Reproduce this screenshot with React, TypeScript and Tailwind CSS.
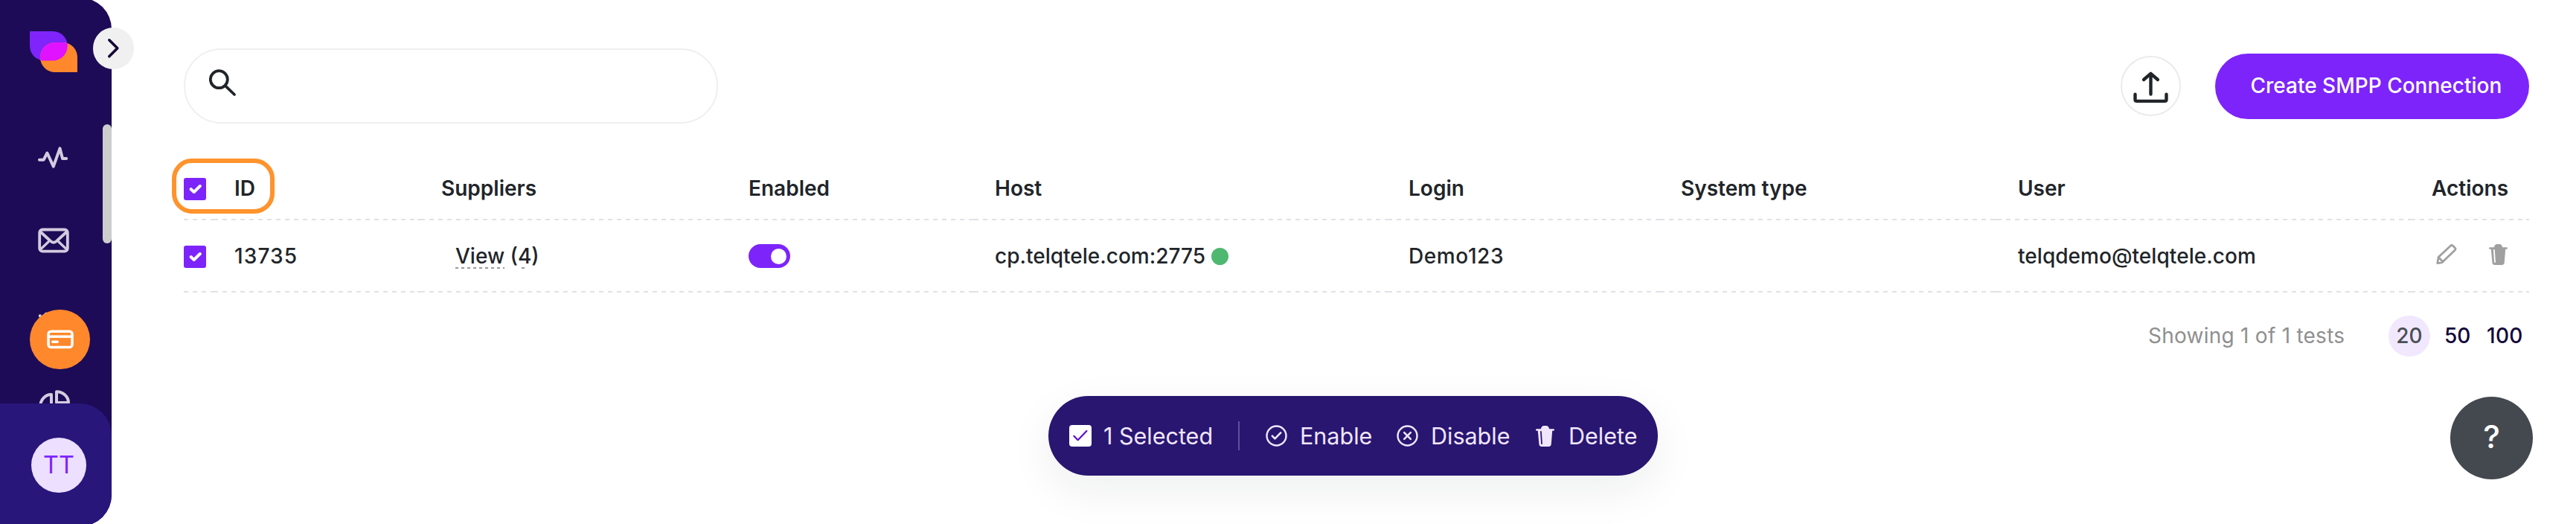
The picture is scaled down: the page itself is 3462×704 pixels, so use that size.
import type { ReactNode } from "react";

function Logo() {
  const purple = "M40 42 H71 A19.75 19.75 0 0 1 71 81.5 H59.75 A19.75 19.75 0 0 1 40 61.75 Z";
  const orange = "M74 57 H84 A20 20 0 0 1 104 77 V97 H74 A20 20 0 0 1 74 57 Z";
  return (
    <svg className="mt-[45px] ml-10 h-[55px] w-16 shrink-0" viewBox="40 42 64 55">
      <defs>
        <clipPath id="logo-overlap">
          <path d={orange} />
        </clipPath>
      </defs>
      <path d={purple} fill="#7f24fb" />
      <path d={orange} fill="#ff882c" />
      <path d={purple} fill="#e012ff" clipPath="url(#logo-overlap)" />
    </svg>
  );
}

function PulseIcon() {
  return (
    <svg
      className="h-[30px] w-[42px] shrink-0"
      viewBox="50 197 42 30"
      fill="none"
      stroke="#d3cce0"
      strokeWidth="4"
      strokeLinecap="round"
      strokeLinejoin="round"
    >
      <path d="M53 214.7 H58.7 L63.4 205.5 L71.8 223.7 L80.5 199.3 L84 212.9 H89.2" />
    </svg>
  );
}

function MailIcon() {
  return (
    <svg
      className="mt-[78.5px] ml-px h-[34px] w-[42px] shrink-0"
      viewBox="51 305.5 42 34"
      fill="none"
      stroke="#d3cce0"
      strokeWidth="3.8"
      strokeLinecap="round"
      strokeLinejoin="round"
    >
      <rect x="53.2" y="308" width="37.6" height="29.2" rx="4" />
      <path d="M55.5 312 L67.5 323 Q72 327.5 76.5 323 L88.5 312" />
      <path d="M55.5 333.5 L65.5 324 M88.5 333.5 L78.5 324" strokeWidth="3.2" />
    </svg>
  );
}

function TrendIcon() {
  return (
    <svg
      className="mt-[76px] h-[12px] w-[20px] shrink-0"
      viewBox="50 415.5 20 12"
      fill="none"
      stroke="#d3cce0"
      strokeWidth="4"
      strokeLinecap="round"
    >
      <path d="M53.8 423.8 V423.9 M58.6 424.5 L62.4 421" />
    </svg>
  );
}

function PieIcon() {
  return (
    <svg
      className="mt-[95.5px] ml-px h-[44px] w-[44px] shrink-0"
      viewBox="51 523 44 44"
      fill="none"
      stroke="#d3cce0"
      strokeWidth="4"
      strokeLinejoin="round"
    >
      <path d="M76 526.2 C85 526.2 92 533 92 541 H76 Z" />
      <path d="M69 530 C61 530 54.2 537 54.2 546 C54.2 556 61 563 71 563 C78 563 84 559 86 553 L69 546 Z" />
    </svg>
  );
}

function TrashIcon({ className, slit }: { className: string; slit: string }) {
  return (
    <svg className={className} viewBox="0 0 25 28" fill="currentColor">
      <path d="M1.2 4.2 H6.8 C7.4 1.6 9 0 11 0 H14 C16 0 17.6 1.6 18.2 4.2 H23.8 Q25 4.3 25 5.4 Q25 6.6 23.8 6.7 H22.2 L20.8 24.6 Q20.5 28 17.4 28 H7.8 Q4.7 28 4.4 24.6 L2.8 6.7 H1.2 Q0 6.6 0 5.4 Q0 4.3 1.2 4.2 Z" />
      <path d="M6.9 7.8 L8 24" stroke={slit} strokeWidth="1.8" strokeLinecap="round" />
    </svg>
  );
}

function PencilIcon() {
  return (
    <svg
      className="h-7 w-7"
      viewBox="0 0 28 28"
      fill="none"
      stroke="currentColor"
      strokeWidth="2.8"
      strokeLinejoin="round"
      strokeLinecap="round"
    >
      <path d="M1.8 25.6 L3.1 17.6 L19.4 2.2 Q21 0.9 22.5 2.2 L25.3 5 Q26.7 6.5 25.3 8 L9.2 23.6 Q8.4 24.4 7.2 24.8 Z" />
      <path d="M3.4 17.8 L9 23.4" />
    </svg>
  );
}

function Checkbox() {
  return (
    <span className="flex size-[30px] rounded-[3px] bg-[#7d24fb]">
      <svg
        viewBox="0 0 30 30"
        fill="none"
        stroke="#fff"
        strokeWidth="4"
        strokeLinecap="round"
        strokeLinejoin="round"
      >
        <path d="M9.7 15.2 L13.7 19 L21.8 11" />
      </svg>
    </span>
  );
}

function Sidebar() {
  return (
    <aside className="-mt-[3px] flex h-[710px] w-[150px] shrink-0 flex-col overflow-hidden rounded-r-[42px] bg-[#1d0b57]">
      <Logo />
      <nav className="mt-[70px] flex h-[375px] shrink-0 justify-between">
        <div className="flex h-[420px] flex-col pt-[30px] pl-[50px]">
          <PulseIcon />
          <MailIcon />
          <TrendIcon />
          <PieIcon />
        </div>
        <div className="h-[160px] w-3 rounded-full bg-[#cdcdcd]" />
      </nav>
      <div className="z-10 flex flex-1 rounded-tr-[43px] bg-[#28167a] pt-[46px] pl-[42px]">
        <div className="flex size-[74px] items-center justify-center rounded-full bg-[#ecdfff] text-[32.4px] text-[#7f24ff]">
          TT
        </div>
      </div>
    </aside>
  );
}

const GRID = "grid grid-cols-[40px_278px_413px_331px_556px_366px_453px_556px_159px]";
const CELL =
  "flex items-center bg-[linear-gradient(#dee2e6,#dee2e6),repeating-linear-gradient(90deg,#dee2e6_0_6px,transparent_6px_12px)] bg-[length:4px_2px,100%_2px] bg-[position:100%_100%,0_100%] bg-no-repeat";

function Cell({ children, first }: { children?: ReactNode; first?: boolean }) {
  return <div className={first ? CELL : `${CELL} pl-7`}>{children}</div>;
}

const HEADERS = ["ID", "Suppliers", "Enabled", "Host", "Login", "System type", "User", "Actions"];

function Table() {
  return (
    <div className="mt-[46px] w-[3152px] whitespace-nowrap text-[28px] text-[#212529]">
      <div className={`${GRID} h-[84px] font-semibold`}>
        <Cell first>
          <Checkbox />
        </Cell>
        {HEADERS.map((h) => (
          <Cell key={h}>
            <span className="pb-[3px]">{h}</span>
          </Cell>
        ))}
      </div>
      <div className={`${GRID} h-[97px] font-medium`}>
        <Cell first>
          <Checkbox />
        </Cell>
        <Cell>
          <span className="pb-[2px] tracking-[1.1px]">13735</span>
        </Cell>
        <Cell>
          <span className="ml-[19px] pb-[2px]">
            <span className="bg-[repeating-linear-gradient(90deg,#999_0_4px,transparent_4px_8px)] bg-[length:100%_2px] bg-[position:0_100%] bg-no-repeat">
              View
            </span>{" "}
            (
            <span className="bg-[linear-gradient(#999,#999)] bg-[length:4px_2px] bg-[position:5px_100%] bg-no-repeat">
              4
            </span>
            )
          </span>
        </Cell>
        <Cell>
          <span className="mb-px flex h-8 w-14 items-center justify-end rounded-full bg-[#7d24fb] pr-[5.5px]">
            <span className="size-[21px] rounded-full bg-white" />
          </span>
        </Cell>
        <Cell>
          <span className="pb-[2px]">cp.telqtele.com:2775</span>
          <span className="ml-2 size-[23.5px] rounded-full bg-[#4fb870]" />
        </Cell>
        <Cell>
          <span className="pb-[2px] tracking-[0.6px]">Demo123</span>
        </Cell>
        <Cell />
        <Cell>
          <span className="pb-[2px] tracking-[0.05px]">telqdemo@telqtele.com</span>
        </Cell>
        <Cell>
          <span className="mb-[5px] ml-1.5 flex items-center gap-[43px] text-[#a0a0a0]">
            <PencilIcon />
            <TrashIcon className="h-7 w-[25px]" slit="#fff" />
          </span>
        </Cell>
      </div>
    </div>
  );
}

function Toolbar() {
  return (
    <div className="mt-[65px] flex w-[3152px] items-start">
      <div className="flex h-[101px] w-[718px] rounded-[50px] border-2 border-[#efefef] pt-6 pl-8">
        <svg className="h-10 w-10" viewBox="281 91 40 40" fill="none" stroke="#212529" strokeWidth="3.8" strokeLinecap="round">
          <circle cx="294.3" cy="106.7" r="11.5" />
          <path d="M303.2 115.6 L315 127" />
        </svg>
      </div>
      <div className="mt-[10px] ml-auto flex size-[81px] items-center justify-center rounded-full border-2 border-[#ebebeb]">
        <svg
          className="h-12 w-12"
          viewBox="2866.5 91.5 48 48"
          fill="none"
          stroke="#212529"
          strokeWidth="4.4"
          strokeLinecap="round"
          strokeLinejoin="round"
        >
          <path d="M2890 98.5 V126 M2880.6 106.5 L2890 98.3 L2899.4 106.5" />
          <path d="M2869 126.3 V133 Q2869 135.4 2871.4 135.4 H2908.6 Q2911 135.4 2911 133 V126.3" />
        </svg>
      </div>
      <button className="mt-[7px] ml-[46px] h-[88px] w-[422px] rounded-full bg-[#7d24fb] pb-[3px] pl-[47.5px] text-left text-[28px] font-medium whitespace-nowrap text-white">
        Create SMPP Connection
      </button>
    </div>
  );
}

function Pagination() {
  return (
    <div className="mt-[31px] flex h-[55px] w-[3152px] items-center justify-end text-[28px] font-medium whitespace-nowrap text-[#120638]">
      <span className="w-[323px] pb-[2px] font-normal tracking-[0.25px] text-[#8f8f8f]">Showing 1 of 1 tests</span>
      <span className="flex h-[55px] w-14 items-center justify-center rounded-full bg-[#f1e8fe] pb-[2px] text-[#4a4f55]">
        20
      </span>
      <span className="ml-[19px] w-[57px] pb-[2px]">50</span>
      <span className="w-[57px] pb-[2px] tracking-[0.3px]">100</span>
    </div>
  );
}

function CircleIcon({ d }: { d: string }) {
  return (
    <svg
      className="h-[29px] w-[29px]"
      viewBox="0 0 29 29"
      fill="none"
      stroke="currentColor"
      strokeWidth="2.4"
      strokeLinecap="round"
      strokeLinejoin="round"
    >
      <circle cx="14.5" cy="14.5" r="13" />
      <path d={d} strokeWidth="2.6" />
    </svg>
  );
}

function SelectionBar() {
  return (
    <div className="absolute top-[532px] left-[1409px] flex h-[107px] w-[819px] items-center rounded-full bg-[#281671] pl-7 text-[30.5px] whitespace-nowrap text-[#f1e6ff] shadow-[0_20px_60px_rgba(20,30,30,0.07)]">
      <span className="flex h-[29px] w-[30px] rounded-[4px] bg-white">
        <svg viewBox="0 0 30 29" fill="none" stroke="#5b10cc" strokeWidth="2.2" strokeLinecap="round" strokeLinejoin="round">
          <path d="M6.3 14.8 L11.6 20.2 L23.4 8" />
        </svg>
      </span>
      <span className="ml-4 w-[181px]">1 Selected</span>
      <span className="h-[39px] w-[2px] bg-[#5f4f98]" />
      <span className="ml-[35px] flex w-[176px] items-center gap-[17px]">
        <CircleIcon d="M8.8 14.6 L12.4 18.4 L20.2 10.4" />
        Enable
      </span>
      <span className="flex w-[187px] items-center gap-[17px]">
        <CircleIcon d="M10.2 10.2 L18.8 18.8 M18.8 10.2 L10.2 18.8" />
        Disable
      </span>
      <span className="flex items-center gap-[19px]">
        <TrashIcon className="h-7 w-[25px]" slit="#281671" />
        Delete
      </span>
    </div>
  );
}

export default function App() {
  return (
    <div className="relative flex h-[704px] w-[3462px] overflow-hidden bg-white font-['Inter',sans-serif]">
      <Sidebar />
      <main className="ml-[97px] flex flex-col">
        <Toolbar />
        <Table />
        <Pagination />
      </main>

      <button className="absolute top-[37px] left-[125px] flex h-14 w-[55px] rounded-full bg-[#f0f0f0]">
        <svg
          viewBox="125 37 55 56"
          fill="none"
          stroke="#140738"
          strokeWidth="3.6"
          strokeLinecap="round"
          strokeLinejoin="round"
        >
          <path d="M146.8 53.8 L157.8 64.8 L146.8 75.8" />
        </svg>
      </button>

      <div className="absolute top-[416px] left-10 flex h-20 w-[81px] items-center justify-center rounded-full bg-[#ff882c]">
        <svg className="h-[26px] w-9" viewBox="62 443.5 36 26" fill="none" stroke="#fff" strokeWidth="3.5" strokeLinecap="round">
          <rect x="64" y="445.7" width="32" height="21.4" rx="3.6" />
          <path d="M65 452.7 H95" strokeLinecap="butt" />
          <path d="M69.8 459.8 H76.2" />
        </svg>
      </div>

      <div className="absolute top-[213px] left-[231px] h-[74px] w-[138px] rounded-[27px] border-[6px] border-[#ff932c]" />

      <SelectionBar />

      <button className="absolute top-[533px] left-[3293px] flex size-[111px] items-center justify-center rounded-full bg-[#44484f] pb-[5px] text-[43px] font-medium text-white">
        ?
      </button>
    </div>
  );
}
